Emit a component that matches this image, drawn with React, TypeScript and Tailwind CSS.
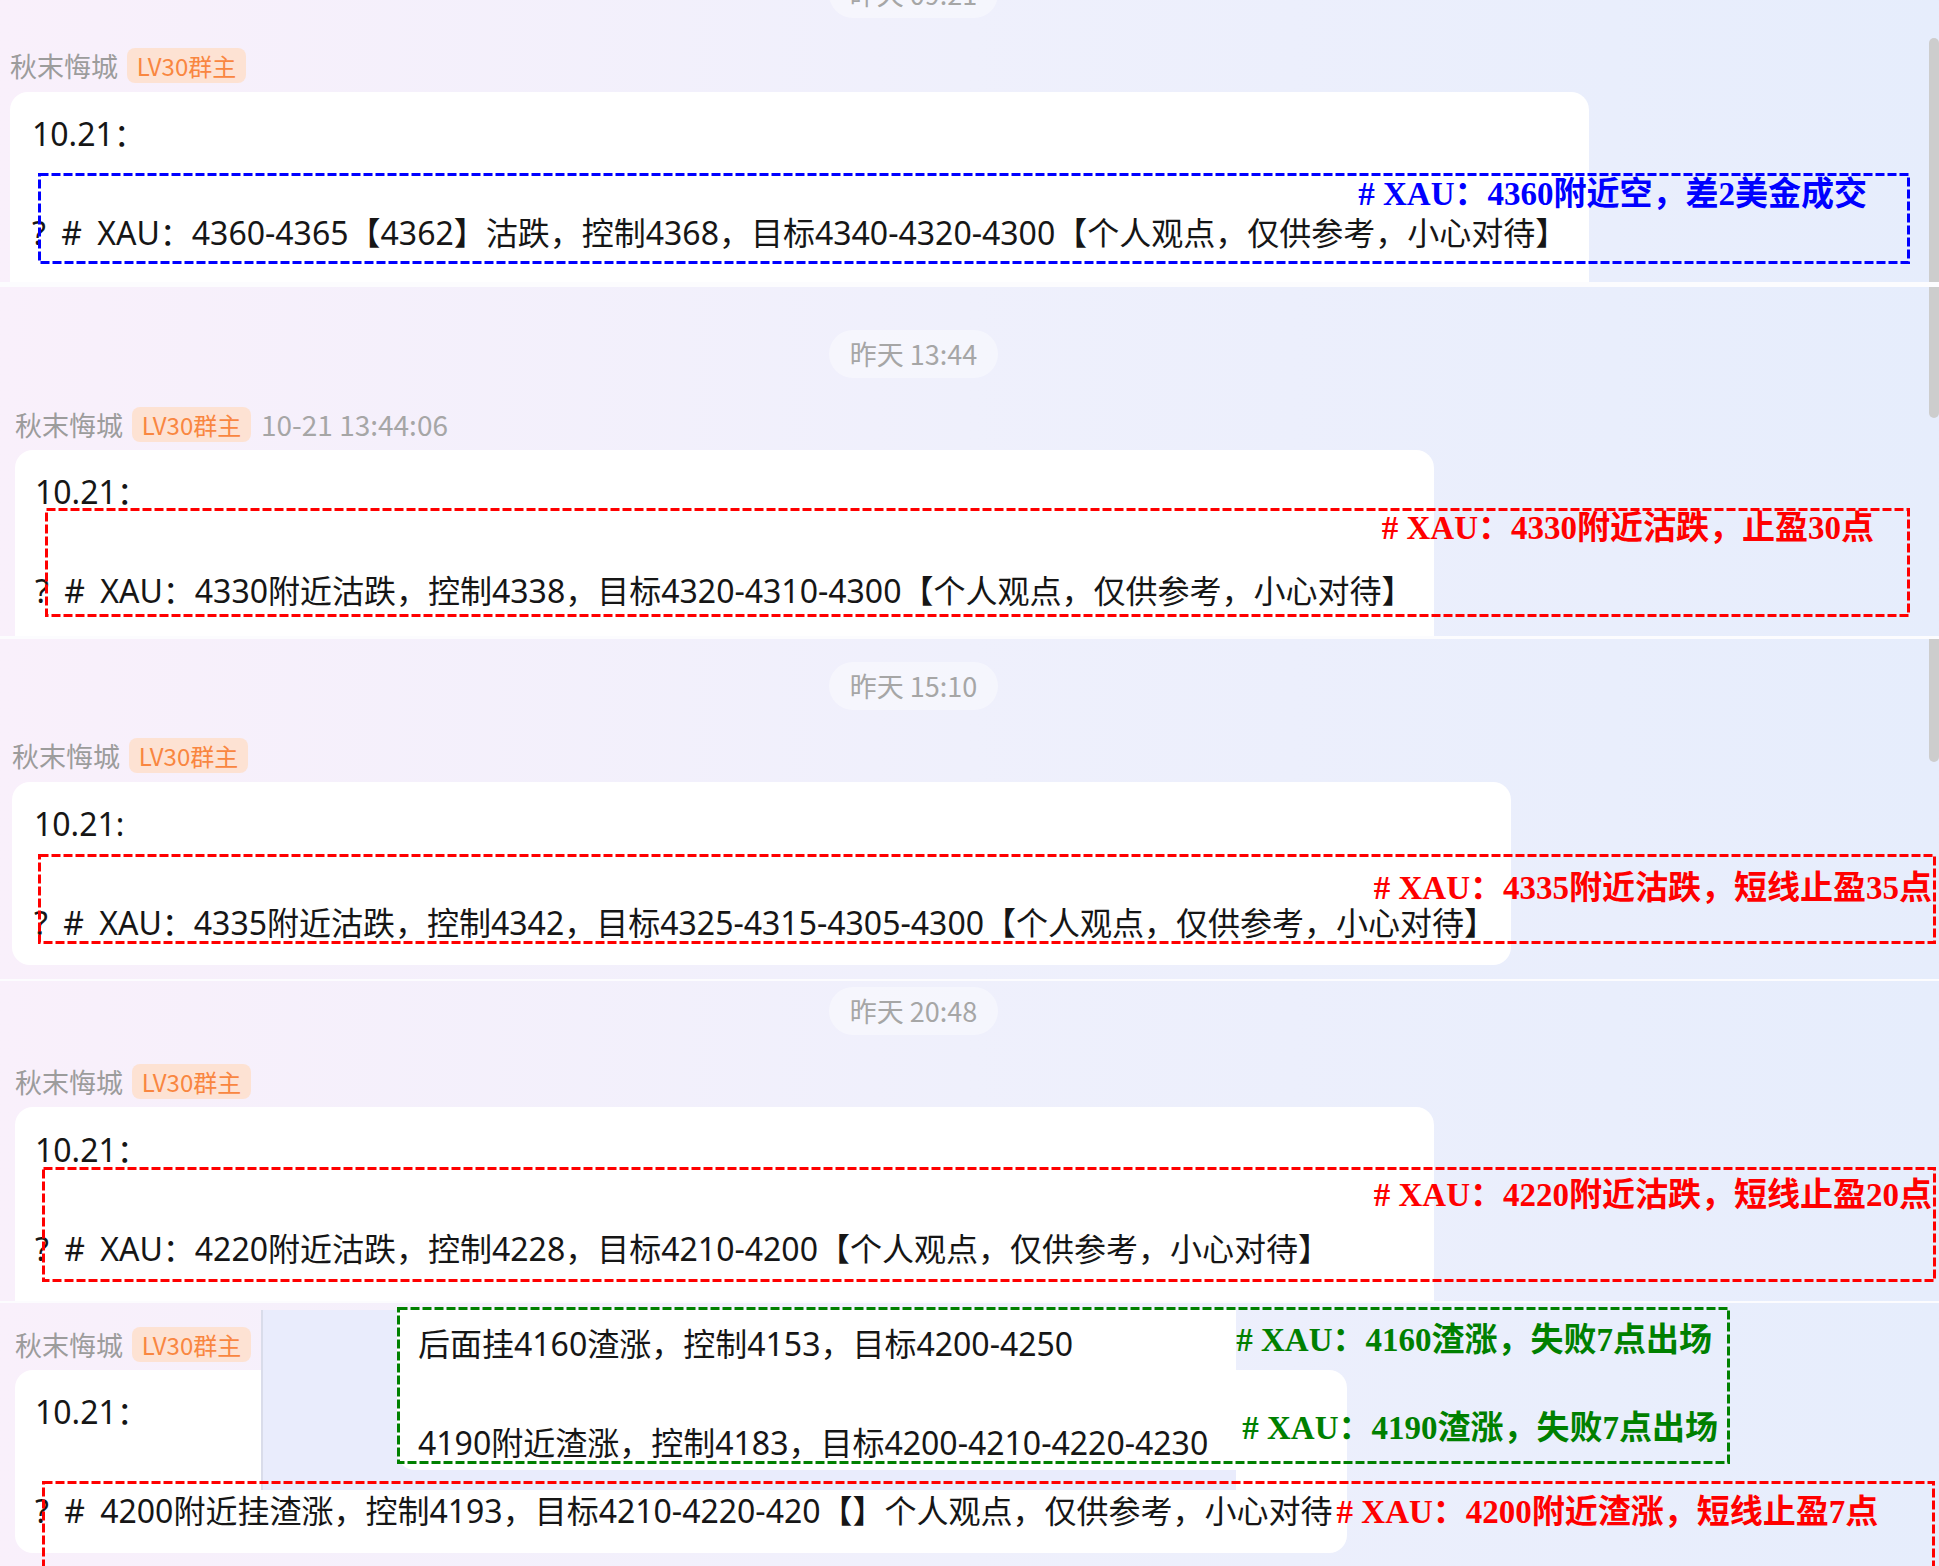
import React from "react";

const SANS = "font-['Noto_Sans_CJK_SC',sans-serif]";
const BODY = "font-['Noto_Sans','Noto_Sans_CJK_SC',sans-serif] text-[32px] leading-[49.5px] text-[#161616] whitespace-nowrap [word-spacing:7px]";
const NOTE = "font-['Liberation_Serif','Noto_Sans_CJK_SC',serif] font-bold text-[33px] leading-[44px] whitespace-nowrap [word-spacing:0px]";

function Pill({ text, cls }: { text: string; cls: string }) {
  return (
    <div className={`${cls} flex h-[48px] w-[169px] items-center justify-center rounded-full bg-white/40 text-[27px] text-[#a6a6a6]`}>
      {text}
    </div>
  );
}

function NameRow({ cls, time }: { cls: string; time?: string }) {
  return (
    <div className={`${cls} flex h-[35px] items-center gap-[9px]`}>
      <span className="text-[27px] leading-[35px] text-[#9c9c9c]">秋末悔城</span>
      <span className="flex h-[35px] w-[119px] items-center justify-center rounded-[8px] bg-[#fde2d3] text-[24px] text-[#f98640]">
        LV30群主
      </span>
      {time && <span className="ml-[1px] text-[28px] leading-[35px] text-[#a6a6a6]">{time}</span>}
    </div>
  );
}

function Lines({ first, last }: { first: string; last: React.ReactNode }) {
  return (
    <div className={BODY}>
      <div>{first}</div>
      <div>&nbsp;</div>
      <div>{last}</div>
    </div>
  );
}

function DashedBox({
  cls,
  w,
  h,
  color,
  children,
}: {
  cls: string;
  w: number;
  h: number;
  color: string;
  children?: React.ReactNode;
}) {
  return (
    <div className={`absolute ${cls}`}>
      <svg className="absolute left-0 top-0" width={w} height={h}>
        <rect x={1.5} y={1.5} width={w - 3} height={h - 3} fill="none" stroke={color} strokeWidth={3} strokeDasharray="9 3" />
      </svg>
      {children}
    </div>
  );
}

function Scrollbar({ cls }: { cls: string }) {
  return <div className={`absolute right-0 w-[10px] bg-[#cdcdcd] ${cls}`} />;
}

const PANEL = `relative shrink-0 overflow-hidden bg-linear-to-r from-[#f9f0fb] via-[#eff0fc] to-[#e6edfc] ${SANS}`;

export default function App() {
  return (
    <div className={`flex h-[1566px] w-[1939px] flex-col overflow-hidden bg-[#fcfcfe] ${SANS}`}>
      {/* Panel 1 */}
      <section className={`${PANEL} h-[282px] pl-[10px]`}>
        <Pill text="昨天 09:21" cls="ml-[819px] -mt-[30px]" />
        <NameRow cls="mt-[30px]" />
        <div className="mt-[9px] h-[300px] w-[1579px] rounded-t-[18px] bg-white pl-[22px] pt-[17px]">
          <Lines
            first="10.21："
            last="? # XAU：4360-4365【4362】沽跌，控制4368，目标4340-4320-4300【个人观点，仅供参考，小心对待】"
          />
        </div>
        <DashedBox cls="left-[38px] top-[173px] flex h-[91px] w-[1872px] justify-end pr-[43px]" w={1872} h={91} color="#0000ff">
          <span className={`relative -mt-[1px] text-[#0000ff] ${NOTE}`}># XAU：4360附近空，差2美金成交</span>
        </DashedBox>
        <Scrollbar cls="top-[38px] bottom-0 rounded-t-full" />
      </section>

      {/* Panel 2 */}
      <section className={`${PANEL} mt-[5px] h-[349px] pl-[15px]`}>
        <Pill text="昨天 13:44" cls="ml-[814px] mt-[43px]" />
        <NameRow cls="mt-[29px]" time="10-21 13:44:06" />
        <div className="mt-[8px] h-[300px] w-[1419px] rounded-t-[18px] bg-white pl-[20px] pt-[17px]">
          <Lines
            first="10.21："
            last="? # XAU：4330附近沽跌，控制4338，目标4320-4310-4300【个人观点，仅供参考，小心对待】"
          />
        </div>
        <DashedBox cls="left-[45px] top-[221px] flex h-[109px] w-[1865px] justify-end pr-[36px]" w={1865} h={109} color="#ff0000">
          <span className={`relative -mt-[2px] text-[#ff0000] ${NOTE}`}># XAU：4330附近沽跌，止盈30点</span>
        </DashedBox>
        <Scrollbar cls="top-0 h-[131px] rounded-b-full" />
      </section>

      {/* Panel 3 */}
      <section className={`${PANEL} mt-[3px] h-[340px] pl-[12px]`}>
        <Pill text="昨天 15:10" cls="ml-[817px] mt-[23px]" />
        <NameRow cls="mt-[28px]" />
        <div className="mt-[9px] h-[183px] w-[1499px] rounded-[18px] bg-white pl-[22px] pt-[17px]">
          <Lines
            first="10.21:"
            last="? # XAU：4335附近沽跌，控制4342，目标4325-4315-4305-4300【个人观点，仅供参考，小心对待】"
          />
        </div>
        <DashedBox cls="left-[38px] top-[215px] flex h-[90px] w-[1898px] justify-end pr-[4px] pt-[12px]" w={1898} h={90} color="#ff0000">
          <span className={`relative text-[#ff0000] ${NOTE}`}># XAU：4335附近沽跌，短线止盈35点</span>
        </DashedBox>
        <Scrollbar cls="top-0 h-[123px] rounded-b-full" />
      </section>

      {/* Panel 4 */}
      <section className={`${PANEL} mt-[2px] h-[320px] pl-[15px]`}>
        <Pill text="昨天 20:48" cls="ml-[814px] mt-[6px]" />
        <NameRow cls="mt-[29px]" />
        <div className="mt-[8px] h-[300px] w-[1419px] rounded-t-[18px] bg-white pl-[20px] pt-[18px]">
          <Lines
            first="10.21："
            last="? # XAU：4220附近沽跌，控制4228，目标4210-4200【个人观点，仅供参考，小心对待】"
          />
        </div>
        <DashedBox cls="left-[42px] top-[186px] flex h-[115px] w-[1894px] justify-end pr-[4px] pt-[6px]" w={1894} h={115} color="#ff0000">
          <span className={`relative text-[#ff0000] ${NOTE}`}># XAU：4220附近沽跌，短线止盈20点</span>
        </DashedBox>
      </section>

      {/* Panel 5 */}
      <section className={`${PANEL} mt-[2px] h-[263px] pl-[15px]`}>
        <NameRow cls="mt-[24px]" />
        <div className="mt-[8px] h-[183px] w-[1332px] rounded-[18px] bg-white pl-[20px] pt-[17px]">
          <Lines
            first="10.21："
            last={
              <>
                ? # 4200附近挂渣涨，控制4193，目标4210-4220-420【】个人观点，仅供参考，小心对待
                <span className={`ml-[4px] text-[#ff0000] ${NOTE}`}># XAU：4200附近渣涨，短线止盈7点</span>
              </>
            }
          />
        </div>

        {/* pasted screenshot laid over the message */}
        <div className="absolute left-[261px] top-[7px] flex h-[180px] w-[975px] border-l-2 border-[#d9dcea] bg-[#e9ecfc] pl-[134px]">
          <div className={`h-[160px] flex-1 rounded-bl-[18px] bg-white pl-[21px] pt-[9px] ${BODY}`}>
            <div>后面挂4160渣涨，控制4153，目标4200-4250</div>
            <div>&nbsp;</div>
            <div>4190附近渣涨，控制4183，目标4200-4210-4220-4230</div>
          </div>
        </div>

        <DashedBox cls="left-[397px] top-[4px] flex h-[157px] w-[1333px] flex-col items-end pt-[11px]" w={1333} h={157} color="#008000">
          <span className={`relative mr-[18px] text-[#008000] ${NOTE}`}># XAU：4160渣涨，失败7点出场</span>
          <span className={`relative mr-[12px] mt-[44px] text-[#008000] ${NOTE}`}># XAU：4190渣涨，失败7点出场</span>
        </DashedBox>

        <DashedBox cls="left-[42px] top-[178px] h-[88px] w-[1893px]" w={1893} h={88} color="#ff0000" />
      </section>
    </div>
  );
}
